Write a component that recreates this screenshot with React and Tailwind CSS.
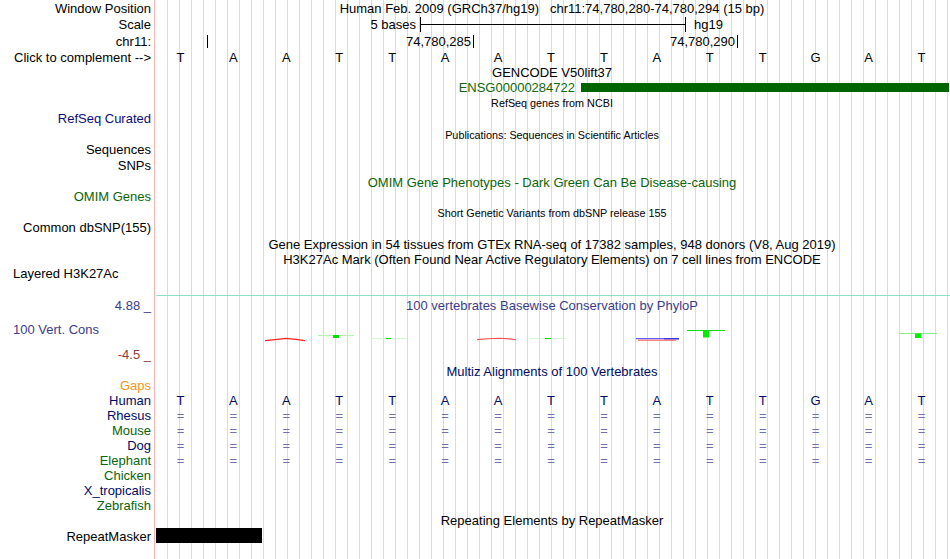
import React from "react";

function Lbl({ className = "", children }) {
  return (
    <div className={`flex items-center justify-end pr-[3px] whitespace-nowrap ${className}`}>
      {children}
    </div>
  );
}

function Center({ className = "", children }) {
  return (
    <div className={`flex items-center justify-center whitespace-pre ${className}`}>
      {children}
    </div>
  );
}

const BASES = ["T", "A", "A", "T", "T", "A", "A", "T", "T", "A", "T", "T", "G", "A", "T"];

function BaseRow({ className = "", items }) {
  return (
    <div className={`grid w-[794px] grid-cols-[repeat(15,minmax(0,1fr))] items-center ${className}`}>
      {items.map((b, i) => (
        <div key={i} className="text-center">
          {b}
        </div>
      ))}
    </div>
  );
}

function Wiggle() {
  return (
    <svg width="796" height="49" viewBox="0 0 796 49" className="block">
      {/* base 3 red wave */}
      <polyline points="111,26.6 121,25.6 132,24.4 142,25.4 151,26.6" fill="none" stroke="#ff2020" strokeWidth="1.3" />
      {/* base 4 green */}
      <line x1="164" y1="21.5" x2="200" y2="21.5" stroke="#b4f0b4" strokeWidth="1" />
      <rect x="179" y="21" width="6" height="3" fill="#00e000" />
      {/* base 5 faint green */}
      <line x1="217" y1="24.5" x2="253" y2="24.5" stroke="#d4f8d4" strokeWidth="1" />
      <rect x="232" y="24" width="5" height="1" fill="#00e000" />
      {/* base 7 faint red wave */}
      <polyline points="323,25.6 334,24.8 346,24.2 356,24.9 362,25.8" fill="none" stroke="#ff5050" strokeWidth="1.1" />
      {/* base 8 faint green */}
      <line x1="375" y1="24.5" x2="412" y2="24.5" stroke="#d4f8d4" strokeWidth="1" />
      <rect x="391" y="24" width="6" height="1" fill="#00e000" />
      {/* base 10 blue / red */}
      <line x1="482" y1="24.6" x2="525" y2="24.6" stroke="#6060ff" strokeWidth="1.2" />
      <line x1="510" y1="24.9" x2="525" y2="24.9" stroke="#2020d0" strokeWidth="1" />
      <line x1="484" y1="26.2" x2="522" y2="26.2" stroke="#ff5050" strokeWidth="1" />
      {/* base 11 green */}
      <line x1="533" y1="16.5" x2="571" y2="16.5" stroke="#10e010" strokeWidth="1" />
      <rect x="549" y="17" width="6" height="6.5" fill="#00ee00" />
      {/* base 15 green */}
      <line x1="745" y1="19.5" x2="783" y2="19.5" stroke="#88ee88" strokeWidth="1" />
      <rect x="761" y="19.5" width="6" height="4.5" fill="#00ee00" />
    </svg>
  );
}

export default function App() {
  return (
    <div className="flex h-[559px] w-[950px] overflow-hidden bg-white font-['Liberation_Sans',Arial,sans-serif] text-[13px] leading-none text-black">
      {/* Left label column */}
      <div className="flex w-[154px] shrink-0 flex-col *:shrink-0">
        <Lbl className="h-[16px]">Window Position</Lbl>
        <Lbl className="h-[17px]">Scale</Lbl>
        <Lbl className="h-[17px]">chr11:</Lbl>
        <Lbl className="h-[14px]">Click to complement --&gt;</Lbl>
        <div className="h-[46px]" />
        <Lbl className="h-[16px] text-[#0c0c78]">RefSeq Curated</Lbl>
        <div className="h-[15px]" />
        <Lbl className="h-[16px]">Sequences</Lbl>
        <Lbl className="h-[16px]">SNPs</Lbl>
        <div className="h-[15px]" />
        <Lbl className="h-[16px] text-[#0a650a]">OMIM Genes</Lbl>
        <div className="h-[15px]" />
        <Lbl className="h-[16px]">Common dbSNP(155)</Lbl>
        <div className="h-[30px]" />
        <div className="flex h-[16px] items-center whitespace-nowrap pl-[13px]">Layered H3K27Ac</div>
        <div className="h-[16px]" />
        <Lbl className="h-[16px] text-[#3c3c8c]">4.88 _</Lbl>
        <div className="h-[8px]" />
        <div className="flex h-[16px] items-center whitespace-nowrap pl-[13px] text-[#3c3c8c]">100 Vert. Cons</div>
        <div className="h-[9px]" />
        <Lbl className="h-[16px] text-[#8c3c3c]">-4.5 _</Lbl>
        <div className="h-[16px]" />
        <Lbl className="h-[15px] text-[#f39512]">Gaps</Lbl>
        <Lbl className="h-[15px] text-[#000a64]">Human</Lbl>
        <Lbl className="h-[15px] text-[#000a64]">Rhesus</Lbl>
        <Lbl className="h-[15px] text-[#0a640a]">Mouse</Lbl>
        <Lbl className="h-[15px] text-[#000a64]">Dog</Lbl>
        <Lbl className="h-[15px] text-[#0a640a]">Elephant</Lbl>
        <Lbl className="h-[15px] text-[#0a640a]">Chicken</Lbl>
        <Lbl className="h-[15px] text-[#000a64]">X_tropicalis</Lbl>
        <Lbl className="h-[15px] text-[#0a640a]">Zebrafish</Lbl>
        <div className="h-[15px]" />
        <Lbl className="h-[16px]">RepeatMasker</Lbl>
      </div>

      {/* Data column */}
      <div className="flex w-[796px] shrink-0 flex-col bg-[image:linear-gradient(90deg,#f5b0b0_0_1px,#ffffff_1px_13px,transparent_13px),repeating-linear-gradient(90deg,transparent_0_1px,#d8d8f6_1px_2px,transparent_2px_12px)] *:shrink-0">
        <Center className="h-[16px]">{"Human Feb. 2009 (GRCh37/hg19)   chr11:74,780,280-74,780,294 (15 bp)"}</Center>

        {/* Scale */}
        <div className="flex h-[17px] items-center">
          <div className="w-[262px] text-right">5 bases</div>
          <div className="ml-[4px] flex h-[15px] w-[266px] items-center border-x border-black">
            <div className="h-px w-full bg-black" />
          </div>
          <div className="ml-[8px]">hg19</div>
        </div>

        {/* Positions */}
        <div className="flex h-[17px] items-center">
          <div className="w-[53px]" />
          <div className="h-[13px] w-px bg-black" />
          <div className="w-[265px] pr-[2px] text-right">74,780,285</div>
          <div className="h-[13px] w-px bg-black" />
          <div className="w-[263px] pr-[2px] text-right">74,780,290</div>
          <div className="h-[13px] w-px bg-black" />
        </div>

        <BaseRow className="h-[14px]" items={BASES} />

        <Center className="h-[16px]">GENCODE V50lift37</Center>
        <div className="flex h-[15px] items-center justify-end pr-[1px]">
          <div className="text-[#0c6a0c]">ENSG00000284722</div>
          <div className="ml-[6px] h-[9px] w-[368px] bg-[#006400]" />
        </div>
        <Center className="h-[16px] text-[10.8px]">RefSeq genes from NCBI</Center>
        <div className="h-[16px]" />
        <Center className="h-[16px] text-[10.8px]">Publications: Sequences in Scientific Articles</Center>
        <div className="h-[31px]" />
        <Center className="h-[16px] text-[#0a650a]">OMIM Gene Phenotypes - Dark Green Can Be Disease-causing</Center>
        <div className="h-[15px]" />
        <Center className="h-[16px] text-[10.8px]">Short Genetic Variants from dbSNP release 155</Center>
        <div className="h-[15px]" />
        <Center className="h-[16px]">Gene Expression in 54 tissues from GTEx RNA-seq of 17382 samples, 948 donors (V8, Aug 2019)</Center>
        <Center className="h-[14px]">H3K27Ac Mark (Often Found Near Active Regulatory Elements) on 7 cell lines from ENCODE</Center>
        <div className="h-[29px]" />
        <div className="ml-[2px] h-px bg-[#8ee0c8]" />
        <Center className="h-[18px] text-[#3c3c8c]">100 vertebrates Basewise Conservation by PhyloP</Center>
        <div className="h-[49px]">
          <Wiggle />
        </div>
        <Center className="h-[16px] text-[#000a64]">Multiz Alignments of 100 Vertebrates</Center>
        <div className="h-[13px]" />
        <BaseRow className="h-[16px] text-[#000a64]" items={BASES} />
        <BaseRow className="h-[15px] text-[#7070b0]" items={BASES.map(() => "=")} />
        <BaseRow className="h-[15px] text-[#7070b0]" items={BASES.map(() => "=")} />
        <BaseRow className="h-[15px] text-[#7070b0]" items={BASES.map(() => "=")} />
        <BaseRow className="h-[15px] text-[#7070b0]" items={BASES.map(() => "=")} />
        <div className="h-[45px]" />
        <Center className="h-[15px]">Repeating Elements by RepeatMasker</Center>
        <div className="ml-[2px] h-[15px] w-[106px] bg-black" />
      </div>
    </div>
  );
}
